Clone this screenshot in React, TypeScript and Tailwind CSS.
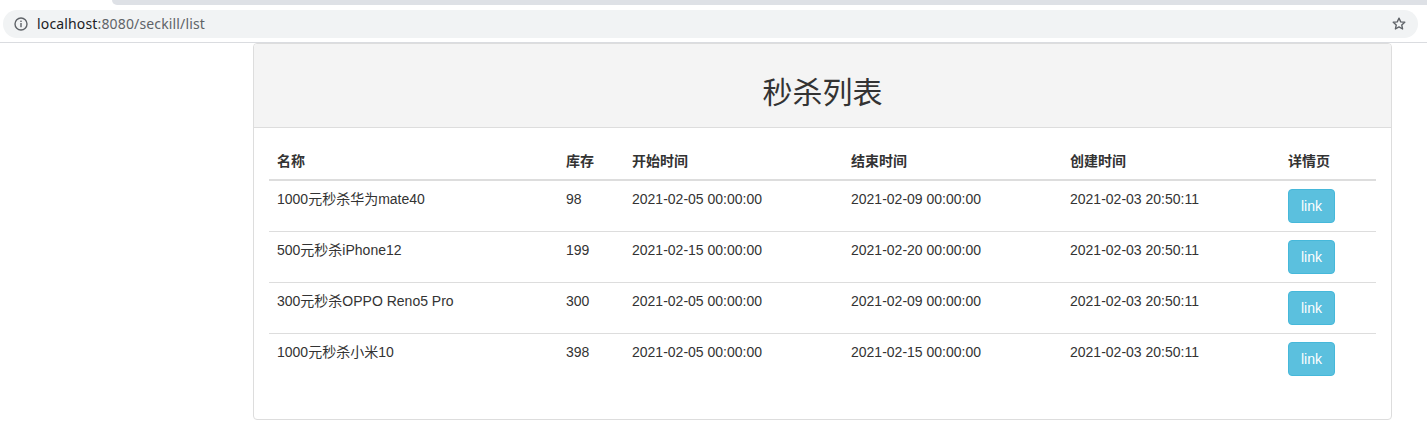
import React from "react";

const rows = [
  { name: "1000元秒杀华为mate40", stock: "98", start: "2021-02-05 00:00:00", end: "2021-02-09 00:00:00", created: "2021-02-03 20:50:11" },
  { name: "500元秒杀iPhone12", stock: "199", start: "2021-02-15 00:00:00", end: "2021-02-20 00:00:00", created: "2021-02-03 20:50:11" },
  { name: "300元秒杀OPPO Reno5 Pro", stock: "300", start: "2021-02-05 00:00:00", end: "2021-02-09 00:00:00", created: "2021-02-03 20:50:11" },
  { name: "1000元秒杀小米10", stock: "398", start: "2021-02-05 00:00:00", end: "2021-02-15 00:00:00", created: "2021-02-03 20:50:11" },
];

function InfoIcon() {
  return (
    <svg width="14" height="14" viewBox="0 0 14 14" fill="none">
      <circle cx="7" cy="7" r="6" stroke="#5f6368" strokeWidth="1.4" />
      <rect x="6.3" y="6" width="1.4" height="4.2" fill="#5f6368" />
      <rect x="6.3" y="3.6" width="1.4" height="1.4" fill="#5f6368" />
    </svg>
  );
}

function StarIcon() {
  return (
    <svg width="16" height="16" viewBox="0 0 24 24" fill="none">
      <path
        d="M12 3.2l2.6 5.6 6.1.6-4.6 4.1 1.3 6-5.4-3.1-5.4 3.1 1.3-6-4.6-4.1 6.1-.6z"
        stroke="#5f6368"
        strokeWidth="2"
        strokeLinejoin="round"
      />
    </svg>
  );
}

export default function App() {
  return (
    <div className="w-[1427px] h-[441px] bg-white overflow-hidden" style={{ fontFamily: '"Liberation Sans", Arial, "Noto Sans CJK SC", sans-serif' }}>
      {/* browser toolbar */}
      <div className="h-[43px] border-b border-[#dadce0] bg-white flex flex-col">
        <div className="h-[5px] flex">
          <div className="w-[112px] bg-white" />
          <div className="flex-1 bg-[#dee1e6] rounded-bl-[8px]" />
        </div>
        <div className="mt-[5px] ml-[3px] w-[1415px] h-[28px] rounded-full bg-[#f1f3f4] flex items-center pl-[11px] pr-[11px]">
          <InfoIcon />
          <div className="ml-[9px] text-[14px] leading-none tracking-[0.15px]" style={{ fontFamily: '"Noto Sans", "Open Sans", sans-serif' }}>
            <span className="text-[#202124]">localhost</span>
            <span className="text-[#5f6368]">:8080/seckill/list</span>
          </div>
          <div className="flex-1" />
          <StarIcon />
        </div>
      </div>

      {/* panel */}
      <div className="ml-[253px] w-[1139px] border border-[#ddd] rounded-[4px] text-[14px] leading-[20px] text-[#333]">
        <div className="bg-[#f4f4f4] border-b border-[#ddd] rounded-t-[3px] px-[15px] pt-[30px] pb-[20px]">
          <h2 className="text-center text-[30px] leading-[33px] font-normal text-[#333]" style={{ fontFamily: '"Noto Sans CJK SC", sans-serif' }}>秒杀列表</h2>
        </div>
        <div className="p-[15px]">
          <table className="w-full border-collapse mb-[20px]">
            <colgroup>
              <col className="w-[289px]" />
              <col className="w-[66px]" />
              <col className="w-[219px]" />
              <col className="w-[219px]" />
              <col className="w-[218px]" />
              <col />
            </colgroup>
            <thead>
              <tr>
                {["名称", "库存", "开始时间", "结束时间", "创建时间", "详情页"].map((h) => (
                  <th key={h} className="text-left font-bold p-[8px] align-bottom border-b-2 border-[#ddd]">{h}</th>
                ))}
              </tr>
            </thead>
            <tbody>
              {rows.map((r, i) => (
                <tr key={i}>
                  <td className={`p-[8px] align-top ${i > 0 ? "border-t border-[#ddd]" : ""}`}>{r.name}</td>
                  <td className={`p-[8px] align-top ${i > 0 ? "border-t border-[#ddd]" : ""}`}>{r.stock}</td>
                  <td className={`p-[8px] align-top ${i > 0 ? "border-t border-[#ddd]" : ""}`}>{r.start}</td>
                  <td className={`p-[8px] align-top ${i > 0 ? "border-t border-[#ddd]" : ""}`}>{r.end}</td>
                  <td className={`p-[8px] align-top ${i > 0 ? "border-t border-[#ddd]" : ""}`}>{r.created}</td>
                  <td className={`p-[8px] align-top ${i > 0 ? "border-t border-[#ddd]" : ""}`}>
                    <a className="inline-block bg-[#5bc0de] border border-[#46b8da] text-white rounded-[4px] px-[12px] py-[6px] text-[14px] leading-[20px]">link</a>
                  </td>
                </tr>
              ))}
            </tbody>
          </table>
        </div>
      </div>
    </div>
  );
}
